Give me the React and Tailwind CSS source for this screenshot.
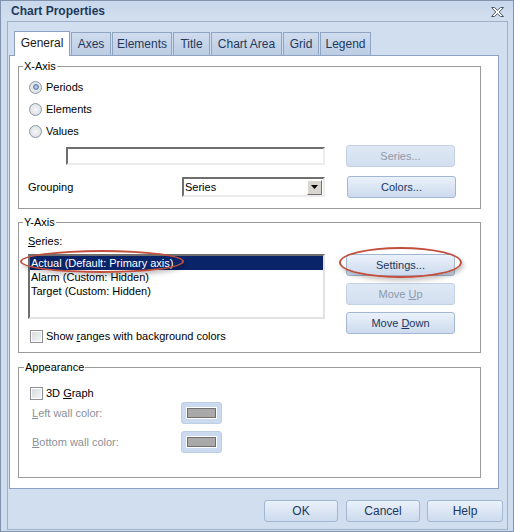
import React from "react";

const ui = "font-['Liberation_Sans',Arial,sans-serif]";

function Btn({ children, disabled, className = "" }) {
  return (
    <div
      className={`flex h-[22px] items-center justify-center rounded-[3px] border ${
        disabled
          ? "border-[#c3d1e4] bg-linear-to-b from-[#dfe8f4] to-[#d3dff0] text-[#8d99aa]"
          : "border-[#a3b7d3] bg-linear-to-b from-[#eaf1fa] to-[#cddbee] text-[#1b3660]"
      } ${className}`}
    >
      {children}
    </div>
  );
}

function Radio({ checked }) {
  return (
    <div className="flex h-[13px] w-[13px] items-center justify-center rounded-full border border-[#8d98a6] bg-radial from-[#f7f7f7] to-[#d3d8df]">
      {checked && (
        <div className="h-[6px] w-[6px] rounded-full border border-[#5d7ca5] bg-radial from-[#c6d6ea] to-[#7f9cc2]" />
      )}
    </div>
  );
}

function Check() {
  return (
    <div className="h-[13px] w-[13px] border border-[#8e9096] bg-white p-[1px]">
      <div className="h-full w-full bg-linear-to-br from-[#d9dbde] to-[#f4f5f6]" />
    </div>
  );
}

function Group({ label, className = "", legendClass = "", children }) {
  return (
    <fieldset className={`w-[463px] border border-[#9a9a9a] ${className}`}>
      <legend className={`px-[1px] leading-[13px] text-black ${legendClass}`}>{label}</legend>
      {children}
    </fieldset>
  );
}

function ColorBtn() {
  return (
    <div className="flex h-[22px] w-[41px] items-center justify-center rounded-[3px] border border-[#bccde4] bg-[#cbdaee]">
      <div className="border border-white">
        <div className="h-[10px] w-[29px] border border-[#6f6f6f] bg-[#a9a9a9]" />
      </div>
    </div>
  );
}

const tabs = [
  ["General", "w-[56px]"],
  ["Axes", "w-[40px]"],
  ["Elements", "w-[60px]"],
  ["Title", "w-[37px]"],
  ["Chart Area", "w-[71px]"],
  ["Grid", "w-[36px]"],
  ["Legend", "w-[51px]"],
];

export default function App() {
  return (
    <div
      className={`relative flex h-[532px] w-[514px] flex-col border border-[#8294ad] bg-[#cfdcee] text-[11px] leading-[13px] text-black ${ui}`}
    >
      {/* title bar */}
      <div className="flex h-[20px] items-center justify-between bg-linear-to-b from-[#c8d7eb] to-[#d2dfef] pl-[10px] pr-[9px]">
        <span className="pt-[1px] text-[12px] font-bold text-[#1e395b]">Chart Properties</span>
        <svg width="13" height="10" viewBox="0 0 13 10" className="mt-[2px]">
          <polygon
            points="0.5,0.5 3.5,0.5 6.5,3.3 9.5,0.5 12.5,0.5 8.2,5 12.5,9.5 9.5,9.5 6.5,6.7 3.5,9.5 0.5,9.5 4.8,5"
            fill="#ffffff"
            stroke="#4b5a6c"
            strokeWidth="1"
            strokeLinejoin="round"
          />
        </svg>
      </div>

      {/* client frame */}
      <div className="ml-[6px] flex h-[509px] w-[501px] flex-col border border-[#9db0c9] bg-[#d1deef]">
        {/* tab strip */}
        <div className="ml-[6px] mt-[10px] flex h-[23px] items-end gap-[1px]">
          {tabs.map(([t, w], i) =>
            i === 0 ? (
              <div
                key={t}
                className={`relative z-10 -mb-[1px] flex h-[25px] items-center justify-center border border-b-0 border-[#8ca2c0] bg-white pb-[1px] text-[12px] text-[#1a1a1a] ${w}`}
              >
                {t}
              </div>
            ) : (
              <div
                key={t}
                className={`flex h-[23px] items-center justify-center border border-b-0 border-[#8ea4c3] bg-linear-to-b from-[#d0dcee] to-[#bccde4] text-[12px] text-[#1e395b] ${w}`}
              >
                {t}
              </div>
            )
          )}
        </div>

        {/* tab page */}
        <div className="ml-[1px] flex h-[434px] w-[490px] flex-col border border-[#8da2c0] bg-white pl-[8px] pt-[4px]">
          <Group label="X-Axis" className="pb-[10px] pl-[10px]" legendClass="-ml-[6px]">
            <div className="mt-[3px] flex h-[22px] items-center gap-[4px]">
              <Radio checked />
              <span>Periods</span>
            </div>
            <div className="flex h-[22px] items-center gap-[4px]">
              <Radio />
              <span>Elements</span>
            </div>
            <div className="flex h-[22px] items-center gap-[4px]">
              <Radio />
              <span>Values</span>
            </div>
            <div className="mt-[3px] flex h-[22px] items-center">
              <div className="ml-[37px] h-[18px] w-[259px] border-2 border-t-[#6f6f6f] border-l-[#6f6f6f] border-b-[#ececec] border-r-[#ececec] bg-white" />
              <Btn disabled className="ml-[21px] w-[109px]">
                Series...
              </Btn>
            </div>
            <div className="mt-[9px] flex h-[22px] items-center">
              <span className="-ml-[1px] w-[154px]">Grouping</span>
              <div className="flex h-[20px] w-[143px] items-center justify-between border-2 border-t-[#6f6f6f] border-l-[#6f6f6f] border-b-[#ececec] border-r-[#ececec] bg-white pl-[1px] pr-[1px]">
                <span>Series</span>
                <div className="flex h-[15px] w-[15px] items-center justify-center border border-t-white border-l-white border-b-[#6e6e6e] border-r-[#6e6e6e] bg-[#d8d5ce]">
                  <svg width="7" height="4" viewBox="0 0 7 4">
                    <polygon points="0,0 7,0 3.5,4" fill="#000" />
                  </svg>
                </div>
              </div>
              <Btn className="ml-[22px] w-[109px]">Colors...</Btn>
            </div>
          </Group>

          <Group label="Y-Axis" className="mt-[7px] pb-[9px] pl-[9px]" legendClass="-ml-[5px]">
            <div className="mt-[6px]">
              <span className="underline underline-offset-1">S</span>eries:
            </div>
            <div className="mt-[6px] flex">
              <div className="flex flex-col">
                <div className="h-[65px] w-[297px] border-2 border-t-[#6f6f6f] border-l-[#6f6f6f] border-b-[#e2e2e2] border-r-[#e2e2e2] bg-white">
                  <div className="h-[14px] bg-[#0a246a] pl-[1px] leading-[14px] text-white">
                    Actual (Default: Primary axis)
                  </div>
                  <div className="h-[14px] pl-[1px] leading-[14px]">Alarm (Custom: Hidden)</div>
                  <div className="h-[14px] pl-[1px] leading-[14px]">Target (Custom: Hidden)</div>
                </div>
                <div className="ml-[2px] mt-[11px] flex items-center gap-[3px]">
                  <Check />
                  <span>
                    Show <span className="underline underline-offset-1">r</span>anges with background colors
                  </span>
                </div>
              </div>
              <div className="ml-[21px] flex w-[109px] flex-col gap-[7px]">
                <Btn>Settings...</Btn>
                <Btn disabled>
                  <span>
                    Move <span className="underline underline-offset-1">U</span>p
                  </span>
                </Btn>
                <Btn>
                  <span>
                    Move <span className="underline underline-offset-1">D</span>own
                  </span>
                </Btn>
              </div>
            </div>
          </Group>

          <Group label="Appearance" className="mt-[8px] pb-[24px] pl-[9px]" legendClass="-ml-[4px]">
            <div className="ml-[2px] mt-[13px] flex items-center gap-[3px]">
              <Check />
              <span>
                3D <span className="underline underline-offset-1">G</span>raph
              </span>
            </div>
            <div className="mt-[2px] flex h-[22px] items-center text-[#8a9099]">
              <span className="ml-[4px] w-[149px]">
                <span className="underline underline-offset-1">L</span>eft wall color:
              </span>
              <ColorBtn />
            </div>
            <div className="mt-[7px] flex h-[22px] items-center text-[#8a9099]">
              <span className="ml-[4px] w-[149px]">
                <span className="underline underline-offset-1">B</span>ottom wall color:
              </span>
              <ColorBtn />
            </div>
          </Group>
        </div>

        {/* dialog buttons */}
        <div className="mr-[4px] mt-[11px] flex justify-end">
          <Btn className="w-[74px] text-[12px]">OK</Btn>
          <Btn className="ml-[8px] w-[74px] text-[12px]">Cancel</Btn>
          <Btn className="ml-[7px] w-[76px] text-[12px]">Help</Btn>
        </div>
      </div>

      {/* red annotation rings */}
      <div className="absolute left-[19px] top-[249px] h-[23px] w-[164px] rounded-[50%] border-2 border-[#c24f3d] shadow-[2px_3px_4px_rgba(0,0,0,0.22)]" />
      <div className="absolute left-[338px] top-[246px] h-[31px] w-[123px] rounded-[50%] border-2 border-[#c24f3d] shadow-[2px_3px_4px_rgba(0,0,0,0.22)]" />
    </div>
  );
}
